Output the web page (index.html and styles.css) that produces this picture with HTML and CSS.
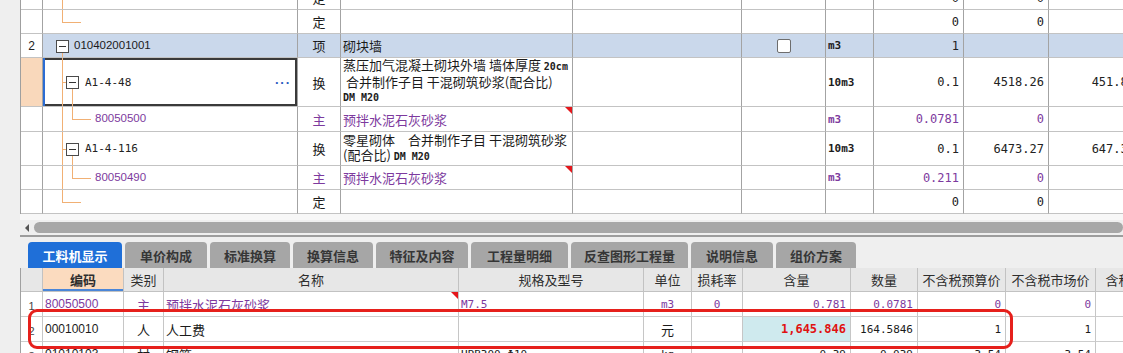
FILE: index.html
```html
<!DOCTYPE html>
<html lang="zh-CN">
<head>
<meta charset="utf-8">
<title>工料机显示</title>
<link rel="stylesheet" href="styles.css">
</head>
<body>
<div class="app">
  <div class="upper">
    <div class="tgrid">
      <!-- partial row -->
      <div class="c rn"></div>
      <div class="c code"><i class="v1"></i></div>
      <div class="c ty">定</div>
      <div class="c"></div>
      <div class="c"></div>
      <div class="c"></div>
      <div class="c"></div>
      <div class="c num">0</div>
      <div class="c num">0</div>
      <div class="c num"></div>

      <!-- 定 -->
      <div class="c rn"></div>
      <div class="c code"><i class="v1 up"></i><i class="h h-end"></i></div>
      <div class="c ty">定</div>
      <div class="c"></div>
      <div class="c"></div>
      <div class="c"></div>
      <div class="c"></div>
      <div class="c num">0</div>
      <div class="c num">0</div>
      <div class="c num"></div>

      <!-- 2 -->
      <div class="c rn">2</div>
      <div class="c code lv1 sel"><b class="box b1"></b><i class="v1 dn"></i>010402001001</div>
      <div class="c ty sel">项</div>
      <div class="c nm sel">砌块墙</div>
      <div class="c sel"></div>
      <div class="c mid sel"><span class="chk"></span></div>
      <div class="c unit sel">m3</div>
      <div class="c num sel">1</div>
      <div class="c num sel"></div>
      <div class="c num sel"></div>

      <!-- A1-4-48 -->
      <div class="c rn cur"></div>
      <div class="c code lv2 focus"><i class="v1"></i><i class="h h-stub"></i><b class="box b2"></b><i class="v2 dn"></i><span class="dcode">A1-4-48</span><span class="more">···</span></div>
      <div class="c ty">换</div>
      <div class="c nm"><div class="lines">蒸压加气混凝土砌块外墙 墙体厚度 <span class="sm">20cm</span><br> 合并制作子目 干混砌筑砂浆(配合比)<br><span class="sm">DM M20</span></div></div>
      <div class="c"></div>
      <div class="c"></div>
      <div class="c unit">10m3</div>
      <div class="c num">0.1</div>
      <div class="c num">4518.26</div>
      <div class="c num">451.83</div>

      <!-- 80050500 -->
      <div class="c rn"></div>
      <div class="c code lv3 pu"><i class="v1"></i><i class="v2 up"></i><i class="h h-leaf"></i>80050500</div>
      <div class="c ty pu">主</div>
      <div class="c nm pu flag">预拌水泥石灰砂浆</div>
      <div class="c"></div>
      <div class="c"></div>
      <div class="c unit pu">m3</div>
      <div class="c num pu">0.0781</div>
      <div class="c num pu">0</div>
      <div class="c num"></div>

      <!-- A1-4-116 -->
      <div class="c rn"></div>
      <div class="c code lv2"><i class="v1"></i><i class="h h-stub"></i><b class="box b2"></b><i class="v2 dn"></i><span class="dcode">A1-4-116</span></div>
      <div class="c ty">换</div>
      <div class="c nm"><div class="lines">零星砌体　合并制作子目 干混砌筑砂浆<br>(配合比) <span class="sm">DM M20</span></div></div>
      <div class="c"></div>
      <div class="c"></div>
      <div class="c unit">10m3</div>
      <div class="c num">0.1</div>
      <div class="c num">6473.27</div>
      <div class="c num">647.33</div>

      <!-- 80050490 -->
      <div class="c rn"></div>
      <div class="c code lv3 pu"><i class="v1"></i><i class="v2 up"></i><i class="h h-leaf"></i>80050490</div>
      <div class="c ty pu">主</div>
      <div class="c nm pu flag">预拌水泥石灰砂浆</div>
      <div class="c"></div>
      <div class="c"></div>
      <div class="c unit pu">m3</div>
      <div class="c num pu">0.211</div>
      <div class="c num pu">0</div>
      <div class="c num"></div>

      <!-- 定 -->
      <div class="c rn"></div>
      <div class="c code"><i class="v1 up"></i><i class="h h-end"></i></div>
      <div class="c ty">定</div>
      <div class="c"></div>
      <div class="c"></div>
      <div class="c"></div>
      <div class="c"></div>
      <div class="c num">0</div>
      <div class="c num">0</div>
      <div class="c num"></div>
    </div>
  </div>

  <div class="gap-a"></div>
  <div class="hscroll"><span class="arrow"></span><span class="thumb"></span></div>
  <div class="rule"></div>
  <div class="gap-b"></div>

  <div class="tabs">
    <div class="tab on w94">工料机显示</div>
    <div class="tab w82">单价构成</div>
    <div class="tab w80">标准换算</div>
    <div class="tab w80">换算信息</div>
    <div class="tab w92">特征及内容</div>
    <div class="tab w97">工程量明细</div>
    <div class="tab w117">反查图形工程量</div>
    <div class="tab w82">说明信息</div>
    <div class="tab w80">组价方案</div>
  </div>

  <div class="lower">
    <div class="bgrid">
      <div class="hd"></div>
      <div class="hd key">编码</div>
      <div class="hd">类别</div>
      <div class="hd">名称</div>
      <div class="hd">规格及型号</div>
      <div class="hd">单位</div>
      <div class="hd">损耗率</div>
      <div class="hd">含量</div>
      <div class="hd">数量</div>
      <div class="hd">不含税预算价</div>
      <div class="hd">不含税市场价</div>
      <div class="hd">含税市场价</div>

      <div class="d rnb">1</div>
      <div class="d bc pu">80050500</div>
      <div class="d ctr pu">主</div>
      <div class="d lft pu flag">预拌水泥石灰砂浆</div>
      <div class="d lft pu spec">M7.5</div>
      <div class="d ctr pu bu">m3</div>
      <div class="d ctr pu bn">0</div>
      <div class="d bn pu">0.781</div>
      <div class="d bn pu">0.0781</div>
      <div class="d bn pu">0</div>
      <div class="d bn pu">0</div>
      <div class="d"></div>

      <div class="d rnb">2</div>
      <div class="d bc">00010010</div>
      <div class="d ctr">人</div>
      <div class="d lft">人工费</div>
      <div class="d"></div>
      <div class="d ctr">元</div>
      <div class="d"></div>
      <div class="d bn cy big">1,645.846</div>
      <div class="d bn">164.5846</div>
      <div class="d bn">1</div>
      <div class="d bn">1</div>
      <div class="d"></div>

      <div class="d rnb">3</div>
      <div class="d bc">01010103</div>
      <div class="d ctr">材</div>
      <div class="d lft">钢筋</div>
      <div class="d lft spec">HPB300 Φ10</div>
      <div class="d ctr bu">kg</div>
      <div class="d"></div>
      <div class="d bn">0.39</div>
      <div class="d bn">0.039</div>
      <div class="d bn">3.54</div>
      <div class="d bn">3.54</div>
      <div class="d"></div>
    </div>
    <div class="mark"></div>
  </div>
</div>
</body>
</html>
```

FILE: styles.css
```css
* { box-sizing: border-box; margin: 0; padding: 0; }
html, body { width: 1123px; height: 353px; overflow: hidden; }
body {
  background: #efefef;
  font-family: "Noto Sans CJK SC", "Noto Sans", sans-serif;
  font-size: 13px;
  line-height: 1;
  color: #1b1b1b;
}
.app {
  width: 1123px;
  height: 353px;
  padding-left: 20px;
  display: flex;
  flex-direction: column;
}

/* ---------- upper grid ---------- */
.upper {
  height: 214px;
  flex: none;
  overflow: hidden;
  background: #fff;
  border-left: 1px solid #9f9f9f;
}
.tgrid {
  display: grid;
  grid-template-columns: 22px 255px 43px 232px 169px 84px 48px 90px 85px 91px;
  grid-template-rows: 24px 24px 24px 49px 25px 34px 24px 24px;
  margin-top: -14px;
  width: max-content;
}
.c {
  position: relative;
  display: flex;
  align-items: center;
  border-right: 1px solid #a3a3a3;
  border-bottom: 1px solid #c3c3c3;
  overflow: hidden;
  white-space: nowrap;
}
.rn { justify-content: center; font-family: "Liberation Sans", sans-serif; font-size: 12px; color: #222; }
.rn.cur { background: #f9d8bb; }
.sel { background: #cad8eb; }
.ty { justify-content: center; }
.nm { padding-left: 2px; }
.mid { justify-content: center; }
.num {
  justify-content: flex-end;
  padding-right: 4px;
  font-family: "DejaVu Sans Mono", monospace;
  font-size: 12px;
  color: #222;
}
.unit {
  padding-left: 2px;
  font-family: "DejaVu Sans Mono", monospace;
  font-size: 11px;
  font-weight: bold;
}
.pu, .num.pu { color: #7d3a9e; }
.code { font-family: "Liberation Sans", sans-serif; font-size: 11.5px; }
.lv1 { padding-left: 31px; }
.lv2 { padding-left: 42px; }
.lv3 { padding-left: 52px; }
.dcode { font-family: "DejaVu Sans Mono", monospace; font-size: 11px; color: #222; }
.lines { white-space: pre; line-height: 14.5px; }
.sm { font-family: "DejaVu Sans Mono", monospace; font-size: 10px; font-weight: bold; }

/* tree */
.v1, .v2, .h { position: absolute; background: #f1b074; }
.v1 { left: 19px; width: 1px; top: 0; bottom: 0; }
.v2 { left: 29px; width: 1px; top: 0; bottom: 0; }
.up { bottom: 50%; }
.dn { top: 50%; }
.h { height: 1px; top: 50%; }
.h-end { left: 19px; width: 19px; }
.h-stub { left: 19px; width: 5px; }
.h-leaf { left: 29px; width: 19px; }
.box {
  position: absolute;
  top: 50%;
  width: 13px;
  height: 13px;
  margin-top: -6px;
  border: 1px solid #4a4a4a;
  background: #fff;
  z-index: 1;
}
.box::after {
  content: "";
  position: absolute;
  left: 2px;
  right: 2px;
  top: 5px;
  height: 1px;
  background: #333;
}
.b1 { left: 13px; }
.b2 { left: 23px; }

.focus { box-shadow: inset 2px 0 0 #2b6cd3, inset 0 0 0 2px #3a3a3a; }
.more {
  margin-left: auto;
  margin-right: 6px;
  color: #2a5bbf;
  font-weight: bold;
  font-size: 13px;
  letter-spacing: 1px;
}
.flag::after {
  content: "";
  position: absolute;
  top: 0;
  right: 0;
  border-top: 7px solid #e4161b;
  border-left: 7px solid transparent;
}
.chk {
  width: 14px;
  height: 14px;
  border: 1px solid #6d6d6d;
  border-radius: 2px;
  background: #fff;
}

/* ---------- scroll bar ---------- */
.gap-a { height: 6px; flex: none; background: #f7f7f7; }
.hscroll {
  height: 15px;
  flex: none;
  display: flex;
  align-items: center;
  padding-left: 5px;
  background: #efefef;
}
.arrow {
  width: 0;
  height: 0;
  border-right: 4px solid #555;
  border-top: 4px solid transparent;
  border-bottom: 4px solid transparent;
}
.thumb {
  flex: 1;
  height: 11px;
  margin-left: 5px;
  border-radius: 6px;
  background: #a7a7a7;
}
.rule { height: 2px; flex: none; background: #9d9d9d; }
.gap-b { height: 5px; flex: none; }

/* ---------- tabs ---------- */
.tabs {
  height: 26px;
  flex: none;
  display: flex;
  gap: 3px;
  padding-left: 8px;
}
.tab {
  flex: none;
  display: flex;
  align-items: center;
  justify-content: center;
  background: #a6a6a6;
  color: #363636;
  font-weight: bold;
  font-size: 13px;
  border-radius: 4px 4px 0 0;
}
.tab.on { background: #1f6fd8; color: #fff; }
.w80 { width: 80px; }
.w82 { width: 82px; }
.w92 { width: 92px; }
.w94 { width: 94px; }
.w97 { width: 97px; }
.w117 { width: 117px; }

/* ---------- lower grid ---------- */
.lower {
  position: relative;
  flex: 1;
  overflow: hidden;
  background: #fff;
  border-left: 1px solid #a0a0a0;
}
.bgrid {
  display: grid;
  grid-template-columns: 22px 81px 40px 295px 185px 48px 51px 108px 67px 88px 90px 85px;
  grid-template-rows: 24px 25px 25px 25px;
  width: max-content;
}
.hd {
  display: flex;
  align-items: center;
  justify-content: center;
  background: #e7e7e7;
  border-right: 1px solid #c2c2c2;
  border-bottom: 1px solid #c2c2c2;
  color: #2e2e2e;
}
.hd.key { background: #fbdbbf; font-weight: bold; box-shadow: inset 0 -2px 0 #4a86d8; }
.d {
  position: relative;
  display: flex;
  align-items: center;
  border-right: 1px solid #c6c6c6;
  border-bottom: 1px solid #cdcdcd;
  overflow: hidden;
  white-space: nowrap;
}
.rnb {
  justify-content: center;
  align-items: flex-end;
  padding-bottom: 4px;
  font-family: "Liberation Sans", sans-serif;
  font-size: 11px;
  color: #444;
}
.bc { padding-left: 2px; font-family: "Liberation Sans", sans-serif; font-size: 12px; }
.ctr { justify-content: center; }
.lft { padding-left: 2px; }
.spec { font-family: "DejaVu Sans Mono", monospace; font-size: 11px; }
.bu { font-family: "DejaVu Sans Mono", monospace; font-size: 11px; }
.bn {
  justify-content: flex-end;
  padding-right: 4px;
  font-family: "DejaVu Sans Mono", monospace;
  font-size: 11px;
}
.ctr.bn { justify-content: center; padding-right: 0; }
.cy { background: #cfeaee; }
.big { color: #e01212; font-weight: bold; font-size: 12px; }
.mark {
  position: absolute;
  left: 7px;
  top: 41px;
  width: 985px;
  height: 40px;
  border: 3px solid #e6201c;
  border-radius: 9px;
  pointer-events: none;
}
```
